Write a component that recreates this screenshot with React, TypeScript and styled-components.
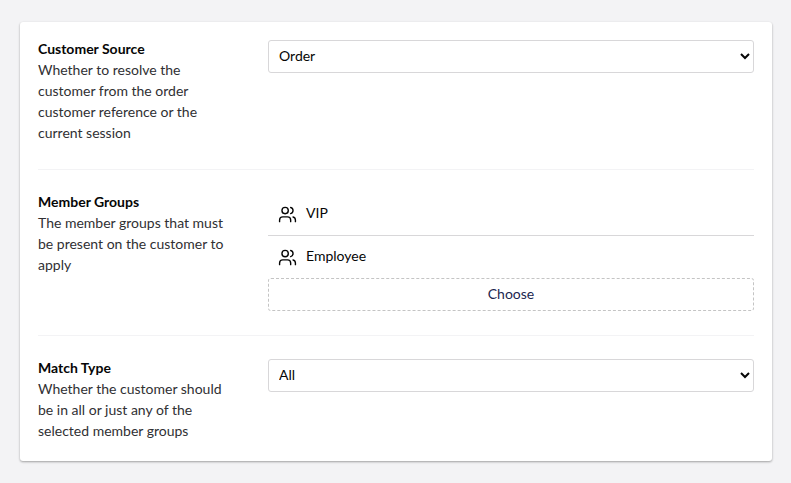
import React from "react";
import styled, { createGlobalStyle } from "styled-components";
import { Users } from "lucide-react";

const GlobalStyle = createGlobalStyle`
  *, *::before, *::after { box-sizing: border-box; }
  body {
    margin: 0;
    background: #f3f3f5;
    color: #060606;
    font: 14px/21px Lato, sans-serif;
  }
`;

const Page = styled.main`
  height: 483px;
  padding: 22px 19px 22px 20px;
`;

const Card = styled.section`
  height: 439px;
  padding: 0 18px;
  background: #fff;
  border-radius: 3px;
  box-shadow: 0 1px 3px rgba(0, 0, 0, 0.12), 0 1px 2px rgba(0, 0, 0, 0.24);
`;

const Property = styled.div<{ $height: number; $top: number; $textTop: number }>`
  display: grid;
  grid-template-columns: 200px 1fr;
  column-gap: 30px;
  align-items: start;
  height: ${(p) => p.$height}px;
  padding-top: ${(p) => p.$textTop}px;
  & + & { border-top: 1px solid #f3f3f5; }
  & > :last-child { margin-top: ${(p) => p.$top - p.$textTop}px; }
`;

const Label = styled.h2`
  margin: 0;
  font-size: 14px;
  line-height: 21px;
  font-weight: 700;
`;

const Description = styled.p<{ $width: number }>`
  margin: 0;
  width: ${(p) => p.$width}px;
  color: #303033;
`;

const Select = styled.select`
  width: 100%;
  height: 33px;
  margin: 0;
  padding: 0 0 2px 6px;
  border: 1px solid #d8d7d9;
  border-radius: 3px;
  background-color: #fff;
  color: #060606;
  font: inherit;
`;

const Groups = styled.div`
  display: flex;
  flex-direction: column;
`;

const GroupRow = styled.div`
  display: flex;
  align-items: center;
  gap: 9px;
  height: 43px;
  padding: 0 10px 2px;
  & + & {
    padding-bottom: 3px;
    border-top: 1px solid #d8d7d9;
  }
`;

const GroupIcon = styled(Users)`
  flex: none;
  margin-top: 4px;
`;

const ChooseButton = styled.button`
  height: 33px;
  padding: 0 0 2px;
  border: 1px dashed #c4c4c4;
  border-radius: 3px;
  background: transparent;
  color: #1b264f;
  font: inherit;
`;

export default function App() {
  return (
    <>
      <GlobalStyle />
      <Page>
        <Card>
          <Property $height={147} $top={18} $textTop={16}>
            <div>
              <Label>Customer Source</Label>
              <Description $width={170}>
                Whether to resolve the customer from the order customer reference or the current session
              </Description>
            </div>
            <Select defaultValue="Order">
              <option>Order</option>
            </Select>
          </Property>
          <Property $height={166} $top={22} $textTop={21}>
            <div>
              <Label>Member Groups</Label>
              <Description $width={200}>
                The member groups that must be present on the customer to apply
              </Description>
            </div>
            <Groups>
              {["VIP", "Employee"].map((name) => (
                <GroupRow key={name}>
                  <GroupIcon size={19} strokeWidth={1.75} />
                  {name}
                </GroupRow>
              ))}
              <ChooseButton>Choose</ChooseButton>
            </Groups>
          </Property>
          <Property $height={126} $top={23} $textTop={21}>
            <div>
              <Label>Match Type</Label>
              <Description $width={200}>
                Whether the customer should be in all or just any of the selected member groups
              </Description>
            </div>
            <Select defaultValue="All">
              <option>All</option>
            </Select>
          </Property>
        </Card>
      </Page>
    </>
  );
}
